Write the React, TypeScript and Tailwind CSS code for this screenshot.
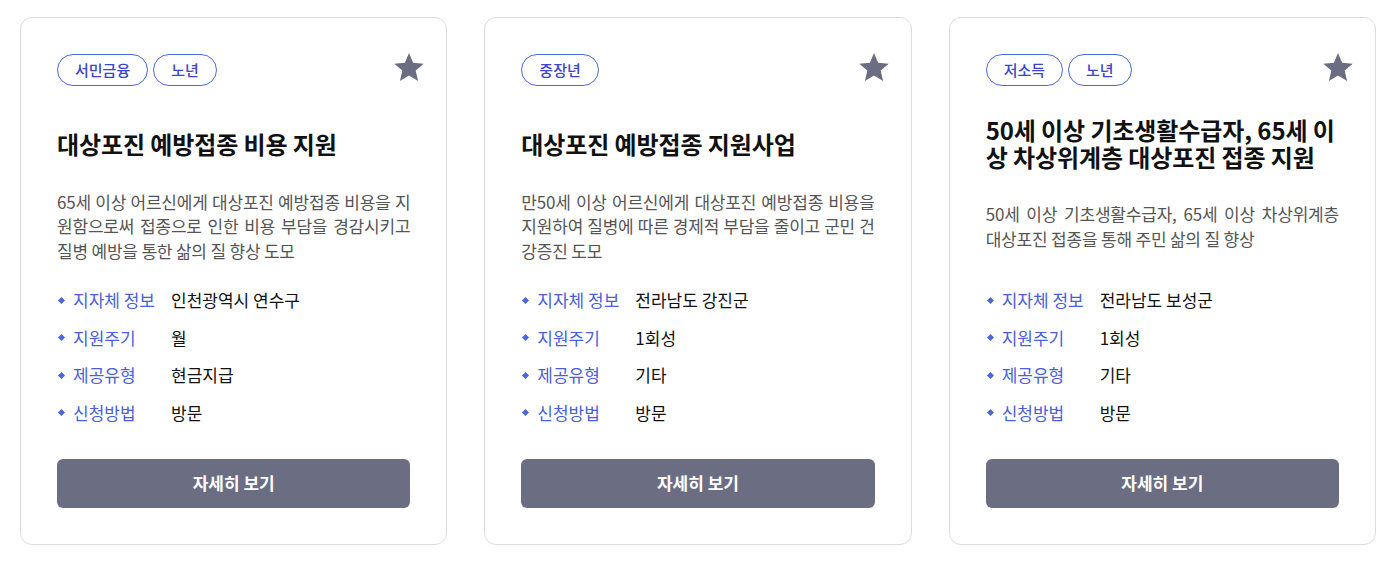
import React from "react";

type Policy = {
  tags: string[];
  title: string;
  description: string;
  region: string;
  cycle: string;
  provide: string;
  apply: string;
};

const policies: Policy[] = [
  {
    tags: ["서민금융", "노년"],
    title: "대상포진 예방접종 비용 지원",
    description:
      "65세 이상 어르신에게 대상포진 예방접종 비용을 지원함으로써 접종으로 인한 비용 부담을 경감시키고 질병 예방을 통한 삶의 질 향상 도모",
    region: "인천광역시 연수구",
    cycle: "월",
    provide: "현금지급",
    apply: "방문",
  },
  {
    tags: ["중장년"],
    title: "대상포진 예방접종 지원사업",
    description:
      "만50세 이상 어르신에게 대상포진 예방접종 비용을 지원하여 질병에 따른 경제적 부담을 줄이고 군민 건강증진 도모",
    region: "전라남도 강진군",
    cycle: "1회성",
    provide: "기타",
    apply: "방문",
  },
  {
    tags: ["저소득", "노년"],
    title: "50세 이상 기초생활수급자, 65세 이상 차상위계층 대상포진 접종 지원",
    description:
      "50세 이상 기초생활수급자, 65세 이상 차상위계층 대상포진 접종을 통해 주민 삶의 질 향상",
    region: "전라남도 보성군",
    cycle: "1회성",
    provide: "기타",
    apply: "방문",
  },
];

function StarIcon() {
  return (
    <svg viewBox="0 0 24 24" className="w-[36px] h-[36px]" fill="#6b6e83">
      <path d="M12 2.6l2.75 6.55 7.05.6-5.35 4.63 1.62 6.92L12 17.6l-6.07 3.7 1.62-6.92L2.2 9.75l7.05-.6z" />
    </svg>
  );
}

function InfoRow({ label, value }: { label: string; value: string }) {
  return (
    <div className="flex items-center h-[24px]">
      <span className="w-[5px] h-[5px] bg-[#4a67e0] rotate-45 ml-[2px] mr-[9px] shrink-0" />
      <span className="w-[98px] shrink-0 text-[#4a5edb]">{label}</span>
      <span className="text-[#111]">{value}</span>
    </div>
  );
}

function PolicyCard({ policy }: { policy: Policy }) {
  return (
    <div className="relative bg-white border border-[#dcdcdc] rounded-[12px] px-[36px] pt-[36px] pb-[36px] flex flex-col">
      {/* Tags */}
      <div className="flex gap-[5px] h-[32px]">
        {policy.tags.map((tag) => (
          <span
            key={tag}
            className="h-[32px] px-[17px] flex items-center rounded-full border border-[#4a6ae0] text-[#3c45c9] text-[15px] font-medium"
          >
            {tag}
          </span>
        ))}
      </div>
      <button className="absolute top-[31px] right-[19px]">
        <StarIcon />
      </button>

      {/* Title */}
      <div className="mt-[29px] h-[56px] flex items-center">
        <h3 className="text-[24px] font-bold leading-[27px] text-[#111] tracking-[-0.1px] break-all">
          {policy.title}
        </h3>
      </div>

      {/* Description */}
      <div className="mt-[18px] h-[75px] flex items-center">
        <p className="w-full text-[17px] leading-[24.5px] text-[#555] tracking-[-0.2px] text-justify break-all">
          {policy.description}
        </p>
      </div>

      {/* Info */}
      <div className="mt-[24px] flex flex-col gap-[13.5px] text-[17px]">
        <InfoRow label="지자체 정보" value={policy.region} />
        <InfoRow label="지원주기" value={policy.cycle} />
        <InfoRow label="제공유형" value={policy.provide} />
        <InfoRow label="신청방법" value={policy.apply} />
      </div>

      <button className="mt-[34px] h-[49px] w-full rounded-[6px] bg-[#6b6e83] text-white text-[17px] font-bold">
        자세히 보기
      </button>
    </div>
  );
}

export default function App() {
  return (
    <div
      className="bg-white w-[1395px] h-[561px] pl-[20px] pt-[17px]"
      style={{ fontFamily: '"Noto Sans CJK KR", "Noto Sans", sans-serif' }}
    >
      <div className="w-[1356px] grid grid-cols-3 gap-[37px]">
        {policies.map((p) => (
          <PolicyCard key={p.title} policy={p} />
        ))}
      </div>
    </div>
  );
}
